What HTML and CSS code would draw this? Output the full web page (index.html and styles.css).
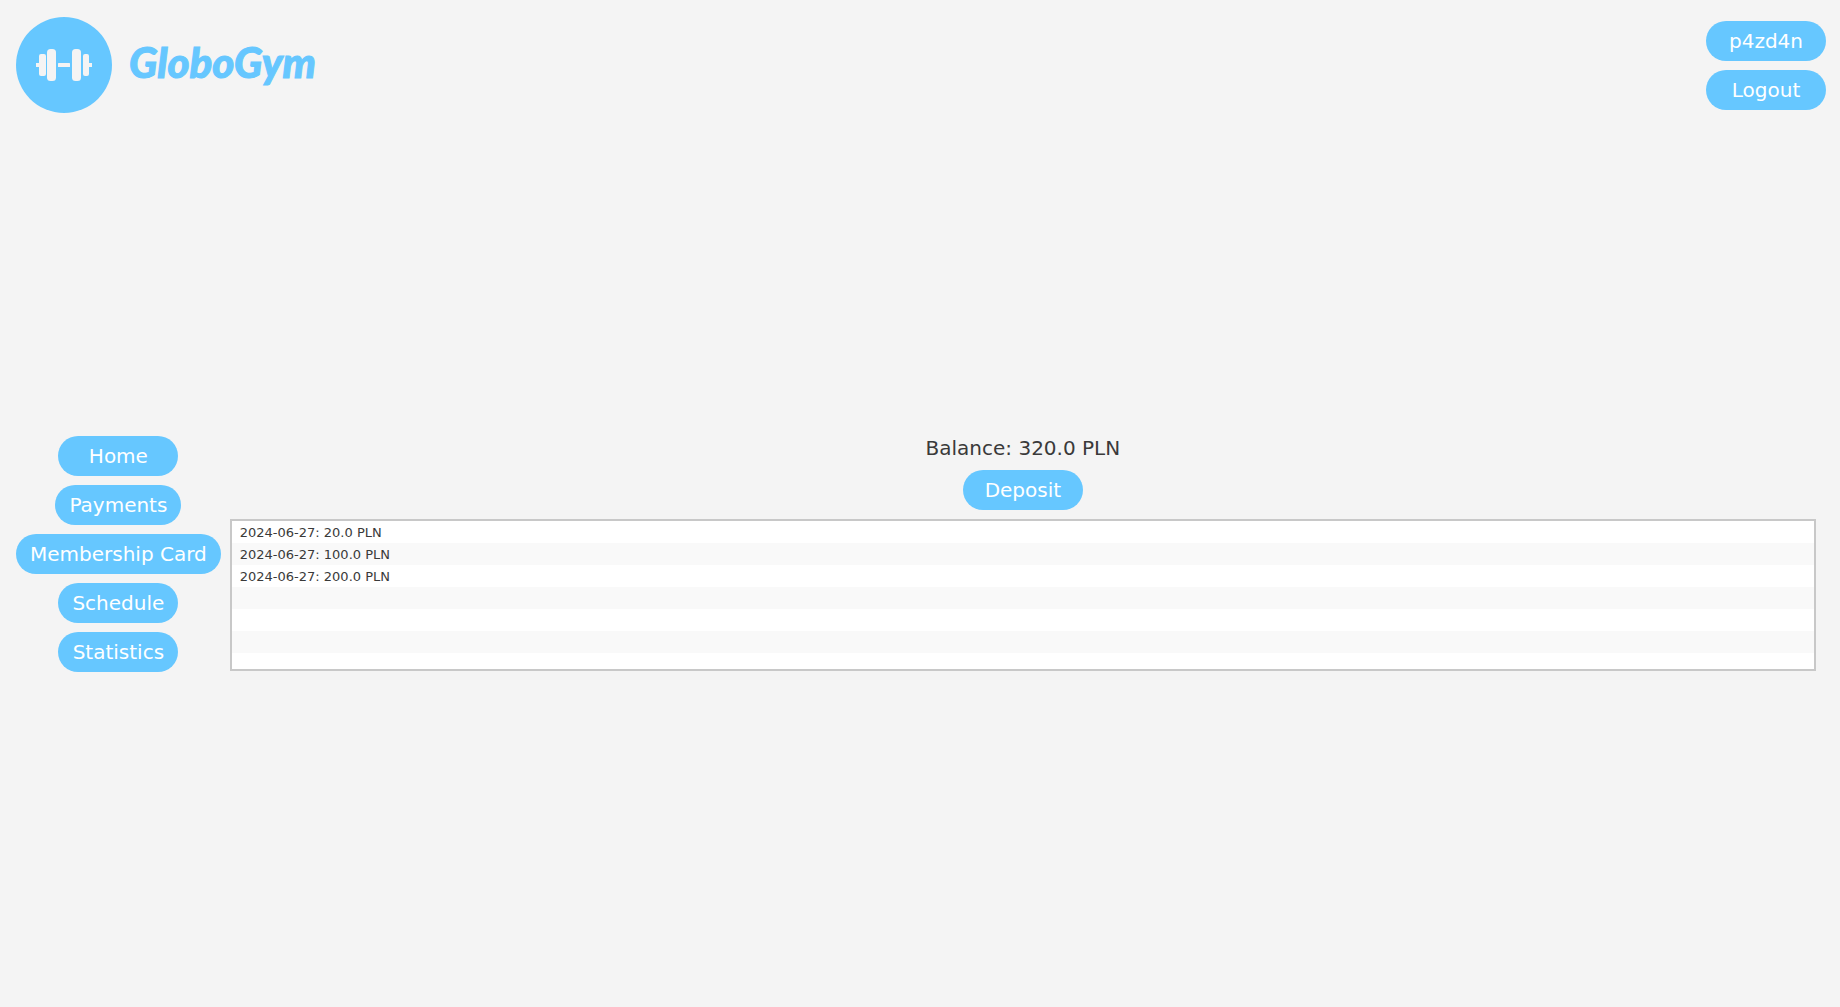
FILE: index.html
```
<!DOCTYPE html>
<html lang="en">
<head>
    <meta charset="UTF-8">
    <meta name="viewport" content="width=device-width, initial-scale=1.0">
    <title>GloboGym</title>
    <link rel="stylesheet" href="styles.css">
</head>
<body>

    <!-- Header -->
    <header class="header">
        <a href="#" class="logo">
            <svg class="logo-icon" viewBox="0 0 96 96" aria-hidden="true">
                <circle cx="48" cy="48" r="48" fill="#66c7ff"/>
                <g fill="#f4f4f4">
                    <rect x="20" y="46" width="5" height="4"/>
                    <rect x="23" y="37" width="7" height="22" rx="2"/>
                    <rect x="31" y="32" width="9" height="32" rx="3.5"/>
                    <rect x="42" y="46" width="12" height="4" rx="0.5"/>
                    <rect x="56" y="32" width="9" height="32" rx="3.5"/>
                    <rect x="67" y="37" width="6" height="22" rx="2"/>
                    <rect x="71" y="46" width="5" height="4"/>
                </g>
            </svg>
            <span class="logo-text">GloboGym</span>
        </a>
        <div class="user-menu">
            <button type="button" class="button">p4zd4n</button>
            <button type="button" class="button">Logout</button>
        </div>
    </header>

    <!-- Menu and payments -->
    <div class="content">
        <nav class="sidebar">
            <button type="button" class="button">Home</button>
            <button type="button" class="button">Payments</button>
            <button type="button" class="button">Membership Card</button>
            <button type="button" class="button">Schedule</button>
            <button type="button" class="button">Statistics</button>
        </nav>

        <main class="payments">
            <p class="balance">Balance: 320.0 PLN</p>
            <button type="button" class="button">Deposit</button>
            <ul class="history">
                <li>2024-06-27: 20.0 PLN</li>
                <li>2024-06-27: 100.0 PLN</li>
                <li>2024-06-27: 200.0 PLN</li>
            </ul>
        </main>
    </div>

</body>
</html>
```
FILE: styles.css
```
* {
    box-sizing: border-box;
}

body {
    display: flex;
    flex-direction: column;
    min-height: 100vh;
    margin: 0;
    padding-bottom: 12px;
    background-color: #f4f4f4;
    color: #3a3a3a;
    font-family: "DejaVu Sans", Verdana, sans-serif;
    font-size: 20px;
}

/* Header */
.header {
    display: flex;
    justify-content: space-between;
    align-items: center;
    padding: 17px 14px 0 16px;
}

.logo {
    display: flex;
    align-items: center;
    gap: 17px;
    color: #66c7ff;
    text-decoration: none;
}

.logo-icon {
    width: 96px;
    height: 96px;
}

.logo-text {
    padding-bottom: 6px;
    font-family: Lato, sans-serif;
    font-size: 42px;
    font-style: italic;
    font-weight: 900;
    line-height: 48px;
    -webkit-text-stroke: 1px #66c7ff;
}

.user-menu {
    display: flex;
    flex-direction: column;
    gap: 9px;
}

/* Button base styles */
.button {
    min-width: 120px;
    height: 40px;
    padding: 0 14px;
    border: none;
    border-radius: 20px;
    background-color: #66c7ff;
    color: white;
    font-family: inherit;
    font-size: 20px;
    cursor: pointer;
}

.button:hover {
    background-color: #4dbdff;
}

/* Content */
.content {
    display: flex;
    align-items: flex-start;
    gap: 9px;
    margin: auto 0;
    padding: 0 24px 0 16px;
}

.sidebar,
.payments {
    display: flex;
    flex-direction: column;
    align-items: center;
    gap: 9px;
}

.payments {
    flex: 1;
}

.balance {
    margin: 0;
    line-height: 25px;
}

/* Payment history, striped down to the bottom of the box */
.history {
    width: 100%;
    height: 152px;
    margin: 0;
    padding: 0;
    border: 2px solid #c8c8c8;
    background: repeating-linear-gradient(white 0 22px, #f9f9f9 22px 44px);
    list-style: none;
    font-size: 13px;
    line-height: 21px;
    overflow-y: auto;
}

.history li {
    padding: 1px 8px 0;
}
```
